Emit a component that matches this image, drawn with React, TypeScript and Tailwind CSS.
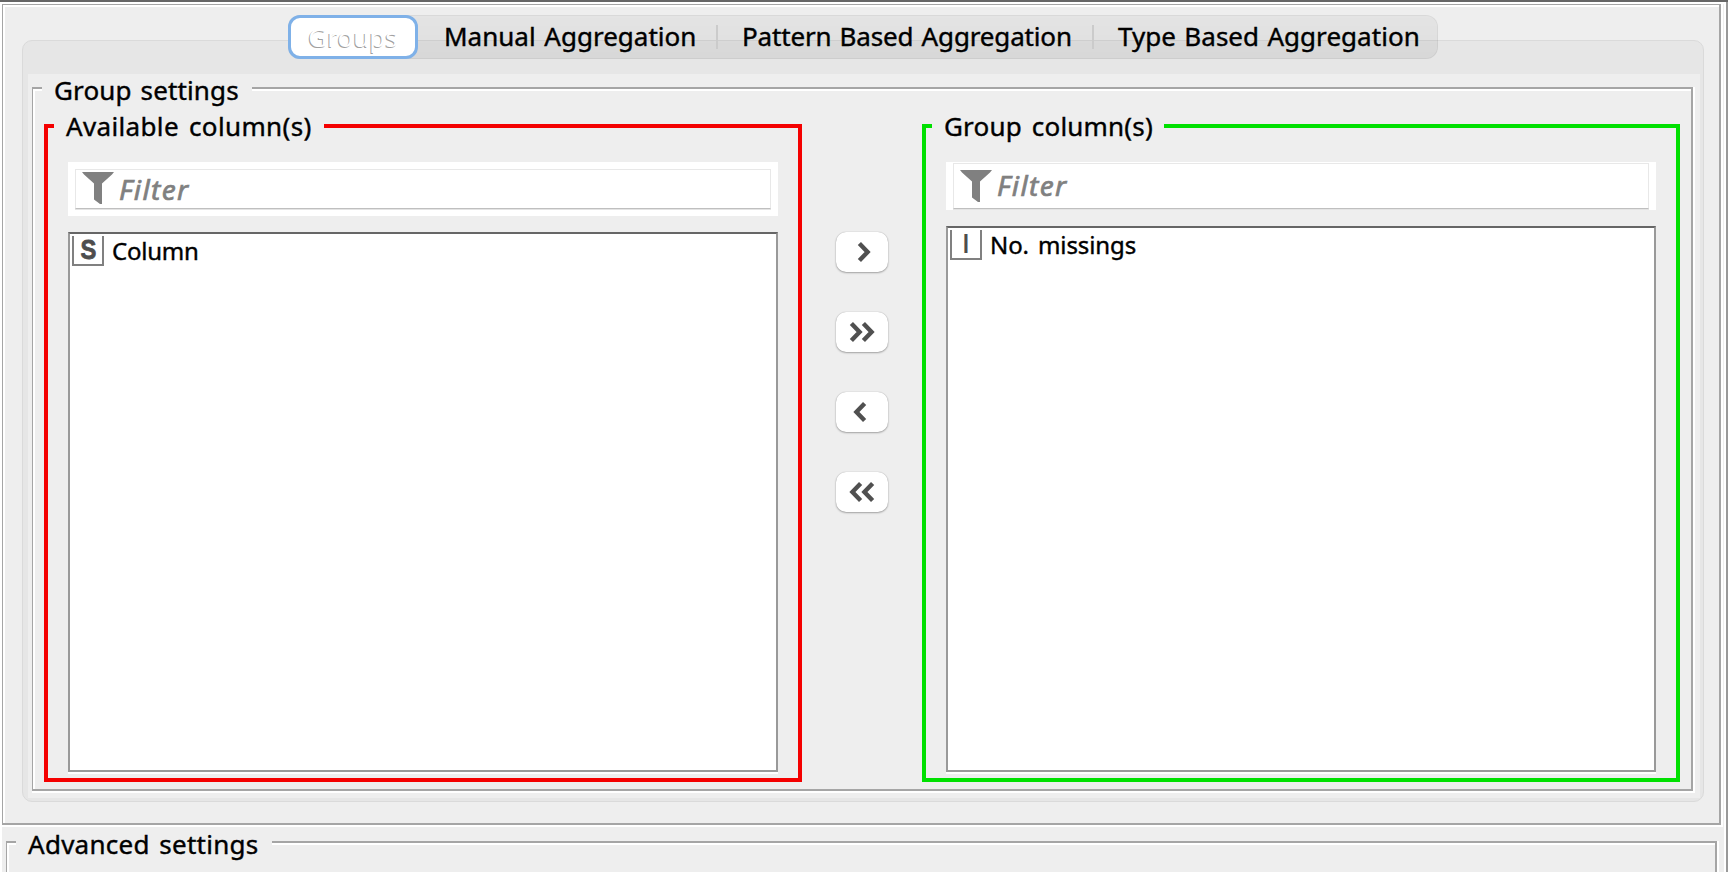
import type { ReactNode } from "react";

function Etched({ className, inner, children }: { className: string; inner?: string; children: ReactNode }) {
  return (
    <div className={`flex border-r-2 border-b-2 border-white ${className}`}>
      <div className="flex grow border-2 border-l border-[#a5a5a5]">
        <div className={`grow border-t-2 border-l-2 border-white ${inner ?? ""}`}>{children}</div>
      </div>
    </div>
  );
}

function Title({ className, children }: { className: string; children: ReactNode }) {
  return (
    <div className={`relative h-8 bg-[#eeeeee] pl-3 leading-8 whitespace-nowrap ${className}`}>{children}</div>
  );
}

function Funnel({ className }: { className: string }) {
  return (
    <svg className={`shrink-0 ${className}`} width="32" height="32" viewBox="0 0 16 16" fill="#808080">
      <path d="M0 0H16L15 1.2L10 5.8V16H9L6 13.8V5.8L1 1.2Z" />
    </svg>
  );
}

function Filter({ className, box, icon, text }: { className: string; box: string; icon: string; text: string }) {
  return (
    <div className={`bg-white px-[7px] ${className}`}>
      <div
        className={`flex items-start border border-[#e8e8e8] border-b-[#bfbfbf] pl-1.5 shadow-[0_1px_0_#e4e4e4] ${box}`}
      >
        <Funnel className={icon} />
        <span
          className={`ml-[5px] text-[28px] leading-8 tracking-[1.4px] text-[#808080] italic [-webkit-text-stroke:0.7px_#808080] ${text}`}
        >
          Filter
        </span>
      </div>
    </div>
  );
}

function ColumnList({ className, letter, letterClass, label, labelClass }: { className: string; letter: string; letterClass: string; label: string; labelClass: string }) {
  return (
    <div className={`mt-4 border-b-2 border-white ${className}`}>
      <div className="flex h-full items-start border-2 border-[#999999] border-t-[#666666] bg-white">
        <div className="mt-0.5 ml-0.5 flex h-[30px] w-8 items-center justify-center border-2 border-t-0 border-[#808080] font-['Liberation_Sans',sans-serif] text-[28px] leading-7 font-bold text-[#4d4d4d]">
          <span className={letterClass}>{letter}</span>
        </div>
        <span className={`mt-px ml-2 text-2xl leading-8 ${labelClass}`}>{label}</span>
      </div>
    </div>
  );
}

function Chevrons({ left, count }: { left?: boolean; count: number }) {
  return (
    <svg
      className="overflow-visible"
      width={count * 12}
      height="20"
      viewBox={`0 0 ${count * 12} 20`}
      fill="none"
      stroke="#505050"
      strokeWidth="4.4"
    >
      {Array.from({ length: count }, (_, n) => (
        <path key={n} transform={`translate(${n * 12} 0)`} d={left ? "M10.6 1.4L2.4 10L10.6 18.6" : "M1.4 1.4L9.6 10L1.4 18.6"} />
      ))}
    </svg>
  );
}

function MoveButton({ className, children }: { className: string; children: ReactNode }) {
  return (
    <button
      className={`flex h-10 w-[52px] items-start rounded-[10px] bg-white pt-2.5 shadow-[0_0_1px_rgba(0,0,0,0.3),0_1px_2px_rgba(0,0,0,0.3)] ${className}`}
    >
      {children}
    </button>
  );
}

export default function App() {
  return (
    <div className="h-[872px] w-[1728px] overflow-hidden border-t-2 border-[#666666] bg-white font-['Noto_Sans',sans-serif] text-[26px] text-black [-webkit-text-stroke:0.4px]">
      <div className="h-full border-r-2 border-[#999999] pt-0.5 pr-0.5 pl-0.5">
        <div className="h-full bg-[#eeeeee]">
          <Etched className="h-[823px] w-[1721px] [&>div]:border-t" inner="pt-2 pl-[17px]">
            <div className="relative z-10 ml-[266px] flex h-11 w-[1150px] items-center rounded-xl border border-black/5 bg-linear-to-b from-black/4 to-black/6 bg-origin-border leading-8 whitespace-nowrap">
              <div className="-my-px -ml-px flex h-11 w-[130px] shrink-0 items-center justify-center rounded-xl border-[3px] border-[#7fb1e8] bg-white text-white [-webkit-text-stroke:0] [text-shadow:-1px_1px_0_#a0a0a0]">
                Groups
              </div>
              <div className="w-[298px] shrink-0 pb-0.5 pl-[26px] [word-spacing:2px]">Manual Aggregation</div>
              <div className="h-6 w-0.5 shrink-0 bg-[#cbcbcb]" />
              <div className="w-[374px] shrink-0 pb-0.5 pl-[24px] -tracking-[0.15px] [word-spacing:1.5px]">Pattern Based Aggregation</div>
              <div className="h-6 w-0.5 shrink-0 bg-[#cbcbcb]" />
              <div className="pb-0.5 pl-[24px] tracking-[0.04px] [word-spacing:1.5px]">Type Based Aggregation</div>
            </div>

            <div className="-mt-[19px] h-[762px] w-[1682px] rounded-[10px] border border-[#dadada] bg-[#e6e6e6] pt-[33px] pr-[3px] pb-[3px] pl-[5px]">
              <div className="h-full bg-[#eeeeee] pt-[13px] pl-1">
                <Etched className="h-[706px] w-[1663px]">
                  <Title className="-mt-[17px] ml-[7px] w-[210px] tracking-[0.14px] [word-spacing:2px]">Group settings</Title>
                  <div className="flex pt-[18px] pl-[9px]">
                    <section className="h-[658px] w-[758px] border-4 border-[#f40000]">
                      <Title className="-mt-[18px] ml-1.5 w-[270px] tracking-[0.35px] [word-spacing:3px]">Available column(s)</Title>
                      <div className="mt-5 ml-5 w-[710px]">
                        <Filter className="h-[54px] pt-[7px]" box="h-10" icon="mt-0.5" text="mt-[3px]" />
                        <ColumnList
                          className="h-[542px]"
                          letter="S"
                          letterClass="scale-x-85 [-webkit-text-stroke:0.8px]"
                          label="Column"
                          labelClass="-tracking-[0.25px]"
                        />
                      </div>
                    </section>

                    <div className="flex w-[120px] flex-col gap-10 pt-[108px] pl-[34px]">
                      <MoveButton className="pl-[22px]">
                        <Chevrons count={1} />
                      </MoveButton>
                      <MoveButton className="pl-3.5">
                        <Chevrons count={2} />
                      </MoveButton>
                      <MoveButton className="pl-[18px]">
                        <Chevrons left count={1} />
                      </MoveButton>
                      <MoveButton className="pl-3.5">
                        <Chevrons left count={2} />
                      </MoveButton>
                    </div>

                    <section className="h-[658px] w-[758px] border-4 border-[#00e000]">
                      <Title className="-mt-[18px] ml-1.5 w-[232px] tracking-[0.19px] [word-spacing:3px]">Group column(s)</Title>
                      <div className="mt-5 ml-5 w-[710px]">
                        <Filter className="h-12 pt-px" box="h-[46px]" icon="mt-1.5" text="mt-[5px]" />
                        <ColumnList
                          className="h-[548px]"
                          letter="I"
                          letterClass="scale-x-75 [-webkit-text-stroke:0]"
                          label="No. missings"
                          labelClass="-tracking-[0.1px] [word-spacing:3px]"
                        />
                      </div>
                    </section>
                  </div>
                </Etched>
              </div>
            </div>
          </Etched>

          <Etched className="mt-3.5 ml-1 h-20 w-[1713px]">
            <Title className="-mt-[17px] ml-[7px] w-64 tracking-[0.27px] [word-spacing:2.5px]">Advanced settings</Title>
          </Etched>
        </div>
      </div>
    </div>
  );
}
